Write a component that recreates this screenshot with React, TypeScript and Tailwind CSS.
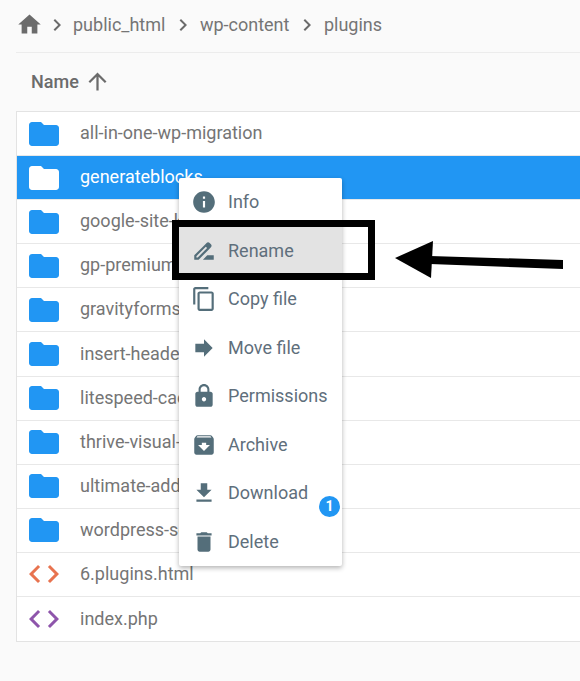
import React from 'react';
import {
  MdHome,
  MdChevronRight,
  MdArrowUpward,
  MdFolder,
  MdCode,
  MdInfo,
  MdDriveFileRenameOutline,
  MdContentCopy,
  MdForward,
  MdLock,
  MdArchive,
  MdFileDownload,
  MdDelete,
} from 'react-icons/md';

const crumbs = ['public_html', 'wp-content', 'plugins'];

const files = [
  { name: 'all-in-one-wp-migration' },
  { name: 'generateblocks', selected: true },
  { name: 'google-site-kit' },
  { name: 'gp-premium' },
  { name: 'gravityforms' },
  { name: 'insert-headers' },
  { name: 'litespeed-cache' },
  { name: 'thrive-visual-editor' },
  { name: 'ultimate-addons' },
  { name: 'wordpress-seo' },
  { name: '6.plugins.html', code: 'text-[#e8734f]' },
  { name: 'index.php', code: 'text-[#8e55ab]' },
];

const menu = [
  { label: 'Info', icon: MdInfo },
  { label: 'Rename', icon: MdDriveFileRenameOutline, active: true },
  { label: 'Copy file', icon: MdContentCopy },
  { label: 'Move file', icon: MdForward },
  { label: 'Permissions', icon: MdLock },
  { label: 'Archive', icon: MdArchive },
  { label: 'Download', icon: MdFileDownload },
  { label: 'Delete', icon: MdDelete },
];

export default function App() {
  return (
    <div className="relative h-[681px] w-[580px] overflow-hidden bg-[#fafafa] font-['Roboto',sans-serif] text-[18px] text-[#757575]">
      <div className="ml-4 flex h-[53px] items-center border-b border-[#ececec] pb-[3px]">
        <MdHome className="text-[27px] text-[#6b6b6b]" />
        {crumbs.map((c, i) => (
          <React.Fragment key={c}>
            <MdChevronRight className={`text-[24px] text-[#6b6b6b] ${i === 0 ? 'mr-[4px] ml-[2px]' : 'mr-[5px] ml-[5.5px]'}`} />
            <span>{c}</span>
          </React.Fragment>
        ))}
      </div>

      <div className="flex h-[58px] items-center pb-[2px] pl-[31px] font-medium text-[#6b6b6b]">
        Name
        <MdArrowUpward className="ml-[5px] text-[27px]" />
      </div>

      <div className="ml-4 w-[600px] border border-[#e3e3e3] bg-white">
        {files.map((f) => (
          <div
            key={f.name}
            className={`flex h-[44.1px] items-center border-b border-[#e8e8e8] pl-[9px] last:border-b-0 ${
              f.selected ? 'bg-[#2196f3] text-white' : ''
            }`}
          >
            {f.code ? (
              <MdCode className={`w-[36px] text-[36px] ${f.code}`} />
            ) : (
              <MdFolder className={`w-[36px] text-[36px] ${f.selected ? 'text-white' : 'text-[#2196f3]'}`} />
            )}
            <span className="mb-[2px] ml-[18px]">{f.name}</span>
          </div>
        ))}
      </div>

      {/* context menu */}
      <div className="absolute left-[179px] top-[178px] w-[163px] rounded-[2px] bg-white shadow-[0_2px_5px_rgba(0,0,0,0.3)]">
        {menu.map((m) => (
          <div
            key={m.label}
            className={`flex h-[48.5px] items-center pl-[12px] text-[#5f6f7c] ${m.active ? 'bg-[#e3e3e3]' : ''}`}
          >
            <m.icon className="text-[26px] text-[#546e7a]" />
            <span className="mb-[1px] ml-[11px]">{m.label}</span>
          </div>
        ))}
      </div>

      <span className="absolute left-[319px] top-[496px] flex h-[21px] w-[21px] items-center justify-center rounded-full bg-[#2196f3] text-[14px] font-bold text-white">
        1
      </span>

      {/* annotation */}
      <div className="absolute left-[172px] top-[220px] h-[60px] w-[203px] border-[7px] border-black" />
      <svg className="absolute left-[380px] top-[220px]" width="200" height="80" viewBox="0 0 200 80">
        <polygon points="15,38 53,21 51,58" fill="#000" />
        <polygon points="50,36 183,40 183,49 50,44" fill="#000" />
      </svg>
    </div>
  );
}
